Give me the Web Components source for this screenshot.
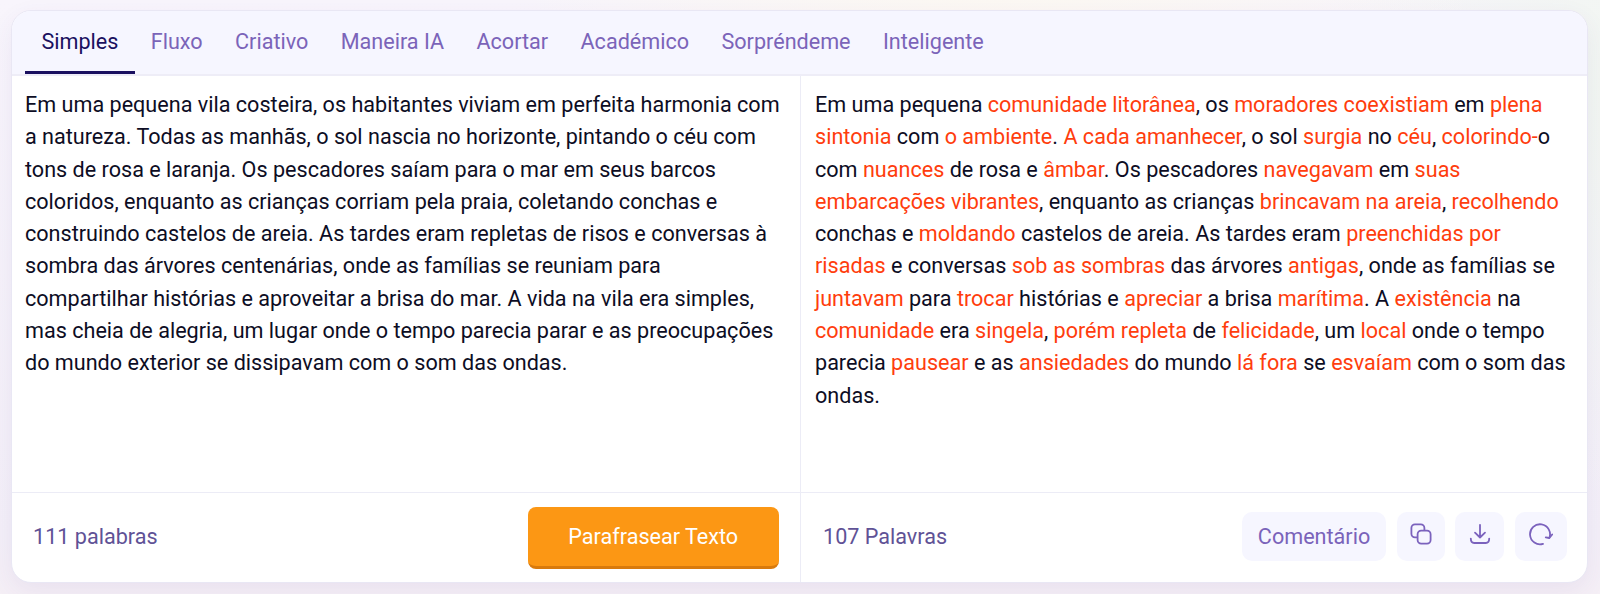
<!DOCTYPE html>
<html lang="pt">
<head>
<meta charset="utf-8">
<title>Parafrasear</title>
<style>
  html, body { margin: 0; height: 594px; overflow: hidden; }
  body {
    box-sizing: border-box;
    padding: 10px 12px 11px 11px;
    font-family: Roboto, "Liberation Sans", sans-serif;
    background:
      radial-gradient(ellipse 500px 300px at 1000px -60px, #fdf9f1, transparent),
      radial-gradient(ellipse 300px 400px at 1620px 100px, #f1f6f1, transparent),
      linear-gradient(180deg, #f8f5fc, #f3eff8 90%, #f5eff6);
  }
</style>
</head>
<body>
<para-card>
  <tab-bar slot="tabs">
    <tab-item active>Simples</tab-item>
    <tab-item>Fluxo</tab-item>
    <tab-item>Criativo</tab-item>
    <tab-item>Maneira IA</tab-item>
    <tab-item>Acortar</tab-item>
    <tab-item>Académico</tab-item>
    <tab-item>Sorpréndeme</tab-item>
    <tab-item>Inteligente</tab-item>
  </tab-bar>

  <text-pane slot="left" side="left">
    Em uma pequena vila costeira, os habitantes viviam em perfeita harmonia com a natureza. Todas as manhãs, o sol nascia no horizonte, pintando o céu com tons de rosa e laranja. Os pescadores saíam para o mar em seus barcos coloridos, enquanto as crianças corriam pela praia, coletando conchas e construindo castelos de areia. As tardes eram repletas de risos e conversas à sombra das árvores centenárias, onde as famílias se reuniam para compartilhar histórias e aproveitar a brisa do mar. A vida na vila era simples, mas cheia de alegria, um lugar onde o tempo parecia parar e as preocupações do mundo exterior se dissipavam com o som das ondas.
    <span slot="count">111 palabras</span>
    <main-button slot="actions">Parafrasear Texto</main-button>
  </text-pane>

  <text-pane slot="right" side="right">
    Em uma pequena <word-change>comunidade litorânea</word-change>, os <word-change>moradores coexistiam</word-change> em <word-change>plena sintonia</word-change> com <word-change>o ambiente</word-change>. <word-change>A cada amanhecer</word-change>, o sol <word-change>surgia</word-change> no <word-change>céu</word-change>, <word-change>colorindo-</word-change>o com <word-change>nuances</word-change> de rosa e <word-change>âmbar</word-change>. Os pescadores <word-change>navegavam</word-change> em <word-change>suas embarcações vibrantes</word-change>, enquanto as crianças <word-change>brincavam na areia</word-change>, <word-change>recolhendo</word-change> conchas e <word-change>moldando</word-change> castelos de areia. As tardes eram <word-change>preenchidas por risadas</word-change> e conversas <word-change>sob as sombras</word-change> das árvores <word-change>antigas</word-change>, onde as famílias se <word-change>juntavam</word-change> para <word-change>trocar</word-change> histórias e <word-change>apreciar</word-change> a brisa <word-change>marítima</word-change>. A <word-change>existência</word-change> na <word-change>comunidade</word-change> era <word-change>singela</word-change>, <word-change>porém repleta</word-change> de <word-change>felicidade</word-change>, um <word-change>local</word-change> onde o tempo parecia <word-change>pausear</word-change> e as <word-change>ansiedades</word-change> do mundo <word-change>lá fora</word-change> se <word-change>esvaíam</word-change> com o som das ondas.
    <span slot="count">107 Palavras</span>
    <soft-button slot="actions" wide>Comentário</soft-button>
    <soft-button slot="actions" icon="copy"></soft-button>
    <soft-button slot="actions" icon="download"></soft-button>
    <soft-button slot="actions" icon="redo"></soft-button>
  </text-pane>
</para-card>

<script>
// componentes de la tarjeta de parafraseo

class ParaCard extends HTMLElement {
  constructor() {
    super();
    this.attachShadow({ mode: "open" });
    this.shadowRoot.innerHTML = `
      <style>
        :host{
          display:block;
          height:573px;
          box-sizing:border-box;
          border:1px solid #e9e7f4;
          border-radius:20px;
          overflow:hidden;
          background:#fff;
          box-shadow:0 8px 24px rgba(90,60,140,.07);
        }
        .wrap{ display:flex; flex-direction:column; height:100%; }
        .panes{ flex:1; display:grid; grid-template-columns:788px 1fr; min-height:0; }
      </style>
      <div class="wrap">
        <slot name="tabs"></slot>
        <div class="panes">
          <slot name="left"></slot>
          <slot name="right"></slot>
        </div>
      </div>
    `;
  }
}

class TabBar extends HTMLElement {
  constructor() {
    super();
    this.attachShadow({ mode: "open" });
    this.shadowRoot.innerHTML = `
      <style>
        :host{
          display:flex;
          height:65px;
          box-sizing:border-box;
          padding-left:13.2px;
          background:#f6f6ff;
          border-bottom:2px solid #eeedf7;
        }
      </style>
      <slot></slot>
    `;
  }
}

class TabItem extends HTMLElement {
  constructor() {
    super();
    this.attachShadow({ mode: "open" });
    this.shadowRoot.innerHTML = `
      <style>
        :host{
          display:block;
          box-sizing:border-box;
          height:63px;
          padding:18px 16.2px 0;
          font-size:21.6px;
          line-height:25px;
          color:#7b64b9;
          white-space:nowrap;
        }
        :host([active]){
          color:#1a1060;
          border-bottom:3px solid #1a1060;
        }
      </style>
      <slot></slot>
    `;
  }
}

class TextPane extends HTMLElement {
  constructor() {
    super();
    this.attachShadow({ mode: "open" });
    this.shadowRoot.innerHTML = `
      <style>
        :host{
          display:flex;
          flex-direction:column;
          min-width:0;
          min-height:0;
        }
        :host([side="right"]){ border-left:1px solid #ececf6; }
        .body{
          flex:1;
          padding:13px 14px 0 13px;
          font-size:21.6px;
          line-height:32.3px;
          color:#0d0d24;
        }
        :host([side="right"]) .body{ padding-left:14px; padding-right:14px; }
        .foot{
          height:90px;
          box-sizing:border-box;
          border-top:1px solid #ececf6;
          display:flex;
          align-items:center;
          justify-content:space-between;
          padding:0 21.5px 2px 21px;
          font-size:21.6px;
          color:#5f5296;
        }
        :host([side="right"]) .foot{ padding:0 20px 2px 22px; }
        .actions{ display:flex; gap:10.67px; align-items:center; }
      </style>
      <div class="body"><slot></slot></div>
      <div class="foot">
        <slot name="count"></slot>
        <div class="actions"><slot name="actions"></slot></div>
      </div>
    `;
  }
}

class WordChange extends HTMLElement {
  constructor() {
    super();
    this.attachShadow({ mode: "open" });
    this.shadowRoot.innerHTML = `<style>:host{ color:#ff3d0d; }</style><slot></slot>`;
  }
}

class MainButton extends HTMLElement {
  constructor() {
    super();
    this.attachShadow({ mode: "open" });
    this.shadowRoot.innerHTML = `
      <style>
        :host{
          display:flex;
          align-items:center;
          justify-content:center;
          box-sizing:border-box;
          width:250.5px;
          height:62px;
          margin-top:2px;
          border-radius:8px;
          background:#fc9714;
          border-bottom:3px solid #d97a0c;
          color:#fff;
          font-size:21.6px;
        }
      </style>
      <slot></slot>
    `;
  }
}

const ICONS = {
  copy: `<rect x="2.4" y="2.4" width="13" height="13" rx="3.6"/><rect x="8.6" y="8.6" width="13" height="13" rx="3.6" fill="#f6f6ff"/>`,
  download: `<path d="M12 2.8v12.7M7 10.6l5 4.9 5-4.9M2.8 16.6c0 3 1.4 4.4 3.4 4.4h11.6c2 0 3.4-1.4 3.4-4.4"/>`,
  redo: `<path d="M14 21.8A10 10 0 1 1 20.3 16"/><path d="M16.8 15.3L20.3 16L23.2 12.5"/>`,
};

class SoftButton extends HTMLElement {
  constructor() {
    super();
    this.attachShadow({ mode: "open" });
    const icon = ICONS[this.getAttribute("icon")];
    const inner = icon
      ? `<svg viewBox="0 0 24 24" width="24" height="24" fill="none" stroke="#7b62bd" stroke-width="1.8" stroke-linecap="round" stroke-linejoin="round">${icon}</svg>`
      : `<slot></slot>`;
    this.shadowRoot.innerHTML = `
      <style>
        :host{
          display:flex;
          align-items:center;
          justify-content:center;
          box-sizing:border-box;
          width:49px;
          height:49px;
          border-radius:10px;
          background:#f6f6ff;
          color:#7a63ba;
          font-size:21.6px;
        }
        :host([wide]){ width:144px; }
        :host([icon="copy"]){ width:48px; }
        :host([icon="redo"]){ width:52px; }
        svg{ margin-bottom:5px; }
      </style>
      ${inner}
    `;
  }
}

customElements.define("para-card", ParaCard);
customElements.define("tab-bar", TabBar);
customElements.define("tab-item", TabItem);
customElements.define("text-pane", TextPane);
customElements.define("word-change", WordChange);
customElements.define("main-button", MainButton);
customElements.define("soft-button", SoftButton);
</script>
</body>
</html>
